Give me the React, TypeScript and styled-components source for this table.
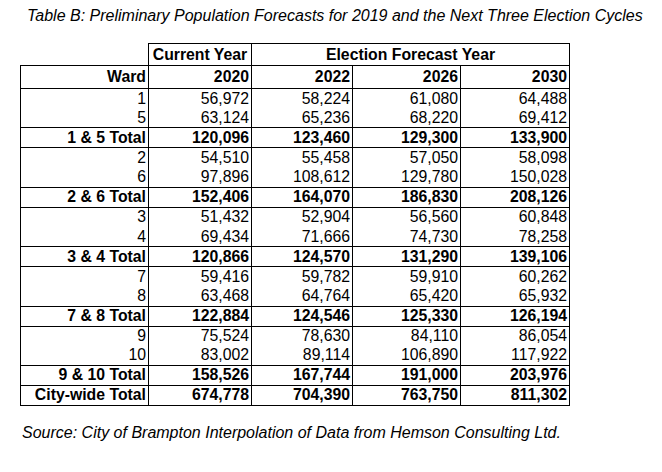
import { Fragment } from "react";
import styled, { createGlobalStyle } from "styled-components";

const GlobalStyle = createGlobalStyle`
  html, body {
    margin: 0;
    padding: 0;
    background: #ffffff;
  }
  body {
    font-family: "Liberation Sans", Arial, sans-serif;
    color: #000000;
  }
`;

const Page = styled.div`
  width: 662px;
  height: 472px;
  padding-top: 7px;
  box-sizing: border-box;
`;

const Caption = styled.div<{ left: number }>`
  font-style: italic;
  font-size: 16px;
  line-height: 18px;
  margin-left: ${(p) => p.left}px;
  white-space: nowrap;
`;

const Table = styled.table`
  margin: 18px 0 0 20px;
  border-collapse: collapse;
  table-layout: fixed;
  width: 550px;
  font-size: 15.8px;
`;

const HeadRow = styled.tr<{ h: number }>`
  height: ${(p) => p.h}px;
`;

const Blank = styled.th`
  border: none;
  padding: 0;
`;

const GroupHead = styled.th`
  border: 1px solid #000;
  font-weight: 700;
  text-align: center;
  padding: 0;
  line-height: 18px;
`;

const ColHead = styled.th`
  border: 1px solid #000;
  font-weight: 700;
  text-align: right;
  padding: 0 2px 0 0;
  line-height: 18px;
`;

const Row = styled.tr<{ total?: boolean }>`
  height: ${(p) => (p.total ? 20 : 19.7)}px;
  font-weight: ${(p) => (p.total ? 700 : 400)};
  border-top: ${(p) => (p.total ? "1px solid #000" : "none")};
  border-bottom: ${(p) => (p.total ? "1px solid #000" : "none")};
`;

const Cell = styled.td`
  border-left: 1px solid #000;
  border-right: 1px solid #000;
  text-align: right;
  padding: 0 2px 0 0;
  line-height: 18px;
  white-space: nowrap;
`;

const Source = styled(Caption)`
  margin-top: 18px;
`;

type Line = string[];

const groups: { wards: Line[]; total: Line }[] = [
  {
    wards: [
      ["1", "56,972", "58,224", "61,080", "64,488"],
      ["5", "63,124", "65,236", "68,220", "69,412"],
    ],
    total: ["1 & 5 Total", "120,096", "123,460", "129,300", "133,900"],
  },
  {
    wards: [
      ["2", "54,510", "55,458", "57,050", "58,098"],
      ["6", "97,896", "108,612", "129,780", "150,028"],
    ],
    total: ["2 & 6 Total", "152,406", "164,070", "186,830", "208,126"],
  },
  {
    wards: [
      ["3", "51,432", "52,904", "56,560", "60,848"],
      ["4", "69,434", "71,666", "74,730", "78,258"],
    ],
    total: ["3 & 4 Total", "120,866", "124,570", "131,290", "139,106"],
  },
  {
    wards: [
      ["7", "59,416", "59,782", "59,910", "60,262"],
      ["8", "63,468", "64,764", "65,420", "65,932"],
    ],
    total: ["7 & 8 Total", "122,884", "124,546", "125,330", "126,194"],
  },
  {
    wards: [
      ["9", "75,524", "78,630", "84,110", "86,054"],
      ["10", "83,002", "89,114", "106,890", "117,922"],
    ],
    total: ["9 & 10 Total", "158,526", "167,744", "191,000", "203,976"],
  },
];

const cityWide: Line = ["City-wide Total", "674,778", "704,390", "763,750", "811,302"];

function DataRow({ line, total }: { line: Line; total?: boolean }) {
  return (
    <Row total={total}>
      {line.map((v, i) => (
        <Cell key={i}>{v}</Cell>
      ))}
    </Row>
  );
}

export default function App() {
  return (
    <>
      <GlobalStyle />
      <Page>
        <Caption left={27}>
          Table B: Preliminary Population Forecasts for 2019 and the Next Three Election Cycles
        </Caption>
        <Table>
          <colgroup>
            <col style={{ width: 128 }} />
            <col style={{ width: 103 }} />
            <col style={{ width: 101 }} />
            <col style={{ width: 108 }} />
            <col style={{ width: 109 }} />
          </colgroup>
          <thead>
            <HeadRow h={22}>
              <Blank />
              <GroupHead>Current Year</GroupHead>
              <GroupHead colSpan={3}>Election Forecast Year</GroupHead>
            </HeadRow>
            <HeadRow h={23}>
              <ColHead>Ward</ColHead>
              <ColHead>2020</ColHead>
              <ColHead>2022</ColHead>
              <ColHead>2026</ColHead>
              <ColHead>2030</ColHead>
            </HeadRow>
          </thead>
          <tbody>
            {groups.map((g) => (
              <Fragment key={g.total[0]}>
                {g.wards.map((w) => (
                  <DataRow key={w[0]} line={w} />
                ))}
                <DataRow line={g.total} total />
              </Fragment>
            ))}
            <DataRow line={cityWide} total />
          </tbody>
        </Table>
        <Source left={22}>
          Source: City of Brampton Interpolation of Data from Hemson Consulting Ltd.
        </Source>
      </Page>
    </>
  );
}
